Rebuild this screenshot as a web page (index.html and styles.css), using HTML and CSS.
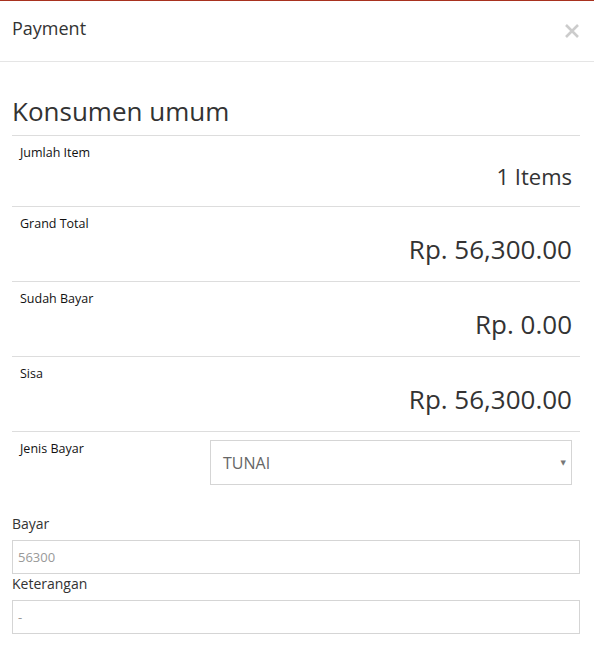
FILE: index.html
```html
<!DOCTYPE html>
<html>
<head>
<meta charset="utf-8">
<link rel="stylesheet" href="styles.css">
</head>
<body>
<div class="modal">
  <div class="modal-header">
    <h4 class="modal-title">Payment</h4>
    <svg class="close" width="16" height="16" viewBox="0 0 16 16">
      <path d="M2 2 L14 14 M14 2 L2 14" stroke="#cccccc" stroke-width="2.6" stroke-linecap="butt"/>
    </svg>
  </div>
  <div class="modal-body">
    <h3 class="customer">Konsumen umum</h3>
    <div class="summary">
      <div class="row">
        <div class="label">Jumlah Item</div>
        <div class="value small">1 Items</div>
      </div>
      <div class="row">
        <div class="label">Grand Total</div>
        <div class="value">Rp. 56,300.00</div>
      </div>
      <div class="row">
        <div class="label">Sudah Bayar</div>
        <div class="value">Rp. 0.00</div>
      </div>
      <div class="row">
        <div class="label">Sisa</div>
        <div class="value">Rp. 56,300.00</div>
      </div>
      <div class="row pay-type">
        <div class="label">Jenis Bayar</div>
        <div class="select-cell">
          <div class="select">
            <span>TUNAI</span>
            <span class="arrow">&#9660;</span>
          </div>
        </div>
      </div>
    </div>
    <div class="field first">
      <label class="field-label">Bayar</label>
      <div class="input">56300</div>
    </div>
    <div class="field">
      <label class="field-label">Keterangan</label>
      <div class="input">-</div>
    </div>
  </div>
</div>
</body>
</html>
```

FILE: styles.css
```css
html, body {
  margin: 0;
  padding: 0;
  background: #fff;
}
body {
  font-family: "Open Sans", "DejaVu Sans", sans-serif;
  color: #333;
}
.modal {
  border-top: 1px solid #a8321f;
  width: 594px;
}
.modal-header {
  height: 61px;
  border-bottom: 1px solid #e5e5e5;
  display: flex;
  align-items: center;
  justify-content: space-between;
  padding: 0 14px 0 12px;
  box-sizing: border-box;
}
.modal-title {
  margin: 0;
  font-size: 18px;
  font-weight: 400;
  color: #333;
  position: relative;
  top: -3px;
}
.close {
  display: block;
}
.modal-body {
  padding: 0 14px 0 12px;
}
.customer {
  margin: 30px 0 0 0;
  font-size: 26px;
  font-weight: 400;
  line-height: 38px;
  color: #333;
  padding-bottom: 5px;
}
.summary {
  display: flex;
  flex-direction: column;
}
.row {
  border-top: 1px solid #ddd;
  padding: 8px 8px 14px 8px;
  display: flex;
  flex-direction: column;
}
.label {
  font-size: 12.5px;
  font-weight: 500;
  line-height: 17px;
  color: #111;
}
.value {
  text-align: right;
  font-size: 26px;
  line-height: 34px;
  font-weight: 400;
  color: #333;
  padding-bottom: 1px;
}
.value.small {
  font-size: 22px;
  line-height: 30px;
  padding-bottom: 1px;
}
.row.pay-type {
  flex-direction: row;
  padding: 0;
}
.row.pay-type .label {
  width: 182px;
  padding: 8px 0 0 8px;
}
.select-cell {
  flex: 1;
  padding: 8px;
}
.select {
  height: 45px;
  box-sizing: border-box;
  border: 1px solid #d5d5d5;
  display: flex;
  align-items: center;
  justify-content: space-between;
  padding: 0 5px 0 12px;
  font-size: 16px;
  color: #666;
}
.arrow {
  font-size: 7px;
  color: #777;
}
.field {
  display: flex;
  flex-direction: column;
}
.field.first {
  margin-top: 21px;
}
.field-label {
  font-size: 14px;
  line-height: 20px;
  font-weight: 400;
  color: #333;
  margin-bottom: 6px;
}
.input {
  height: 34px;
  box-sizing: border-box;
  border: 1px solid #d5d5d5;
  padding: 0 5px;
  display: flex;
  align-items: center;
  font-size: 13px;
  font-weight: 400;
  color: #999;
}
```
